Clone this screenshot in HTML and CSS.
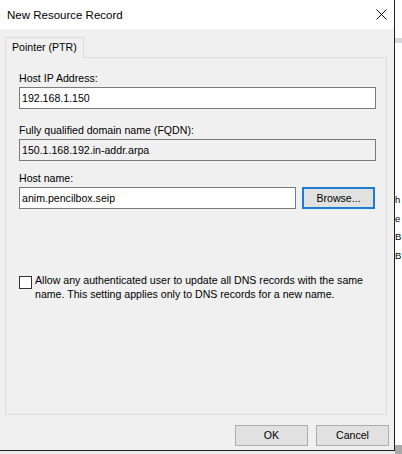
FILE: index.html
```html
<!DOCTYPE html>
<html>
<head>
<meta charset="utf-8">
<link rel="stylesheet" href="styles.css">
</head>
<body>
<div class="screen">
  <div class="dialog">
    <div class="titlebar">
      <span class="title">New Resource Record</span>
      <svg class="close" width="11" height="11" viewBox="0 0 11 11"><path d="M0.5 0.5 L10.5 10.5 M10.5 0.5 L0.5 10.5" stroke="#000" stroke-width="1" fill="none"/></svg>
    </div>
    <div class="body">
      <div class="tabs"><div class="tab">Pointer (PTR)</div></div>
      <div class="panel">
        <div class="field">
          <div class="label">Host IP Address:</div>
          <div class="input">192.168.1.150</div>
        </div>
        <div class="field field-fqdn">
          <div class="label">Fully qualified domain name (FQDN):</div>
          <div class="input input-readonly">150.1.168.192.in-addr.arpa</div>
        </div>
        <div class="field field-host">
          <div class="label">Host name:</div>
          <div class="input-row">
            <div class="input input-host">anim.pencilbox.seip</div>
            <div class="button button-default">Browse...</div>
          </div>
        </div>
        <div class="check-row">
          <div class="checkbox"></div>
          <div class="check-text">Allow any authenticated user to update all DNS records with the same name. This setting applies only to DNS records for a new name.</div>
        </div>
      </div>
      <div class="footer">
        <div class="button">OK</div>
        <div class="button">Cancel</div>
      </div>
    </div>
  </div>
  <div class="behind">
    <div class="behind-top">
      <div class="behind-bar"></div>
      <div class="behind-text">
        <div>h</div>
        <div>e</div>
        <div>B</div>
        <div>B</div>
      </div>
    </div>
    <div class="behind-bottom"></div>
  </div>
</div>
</body>
</html>
```

FILE: styles.css
```css
html, body {
  margin: 0;
  padding: 0;
}
body {
  font-family: "Liberation Sans", Arial, sans-serif;
  font-size: 10.6px;
  color: #000;
  background: #ececec;
}
.screen {
  display: flex;
  width: 402px;
  height: 454px;
  overflow: hidden;
}
.dialog {
  flex: none;
  width: 394px;
  height: 450px;
  border-right: 1px solid #1f1f1f;
  border-bottom: 1px solid #1f1f1f;
  display: flex;
  flex-direction: column;
  background: #f0f0f0;
}
.titlebar {
  flex: none;
  height: 29px;
  background: #fff;
  display: flex;
  align-items: center;
  justify-content: space-between;
  padding: 0 7px 0 7px;
}
.title {
  font-size: 11.5px;
  padding-top: 1px;
}
.close {
  display: block;
}
.body {
  flex: 1;
  display: flex;
  flex-direction: column;
  padding: 8px 7px 4px 5px;
}
.tabs {
  display: flex;
  flex: none;
}
.tab {
  position: relative;
  z-index: 1;
  margin-bottom: -1px;
  height: 20px;
  line-height: 18px;
  padding: 0 6px 0 6px;
  border: 1px solid #dcdcdc;
  border-bottom: none;
  background: #f0f0f0;
}
.panel {
  flex: 1;
  border: 1px solid #dcdcdc;
  background: #f0f0f0;
  padding: 13px 10px 0 13px;
  display: flex;
  flex-direction: column;
}
.field {
  display: flex;
  flex-direction: column;
  gap: 2px;
}
.field-fqdn {
  margin-top: 14px;
}
.field-host {
  margin-top: 10px;
}
.label {
  line-height: 14px;
  height: 14px;
  white-space: nowrap;
}
.input {
  box-sizing: border-box;
  height: 22px;
  border: 1px solid #7a7a7a;
  background: #fff;
  padding: 0 2px;
  line-height: 20px;
  white-space: nowrap;
}
.input-readonly {
  background: #f0f0f0;
}
.input-row {
  display: flex;
  align-items: flex-start;
  gap: 6px;
}
.input-host {
  width: 277px;
  flex: none;
}
.button {
  box-sizing: border-box;
  width: 73px;
  height: 21px;
  border: 1px solid #adadad;
  background: #e1e1e1;
  text-align: center;
  line-height: 19px;
  flex: none;
}
.button-default {
  height: 22px;
  border: 2px solid #1f7ad2;
  line-height: 18px;
}
.check-row {
  margin-top: 65px;
  display: flex;
  align-items: flex-start;
  gap: 3px;
}
.checkbox {
  flex: none;
  box-sizing: border-box;
  width: 13px;
  height: 13px;
  margin-top: 2px;
  border: 1px solid #333;
  background: #fff;
}
.check-text {
  flex: 1;
  line-height: 13.5px;
}
.footer {
  flex: none;
  display: flex;
  justify-content: flex-end;
  gap: 8px;
  padding-top: 10px;
  margin-right: -2px;
}
.behind {
  flex: 1;
  display: flex;
  flex-direction: column;
  overflow: hidden;
}
.behind-top {
  flex: 1;
  background: #fff;
  padding-top: 38px;
}
.behind-bar {
  height: 5px;
  background: #d3d8de;
}
.behind-text {
  margin-top: 148px;
  font-size: 9.5px;
  line-height: 18.7px;
}
.behind-bottom {
  flex: none;
  height: 9px;
  background: #a9a9a9;
}
```
